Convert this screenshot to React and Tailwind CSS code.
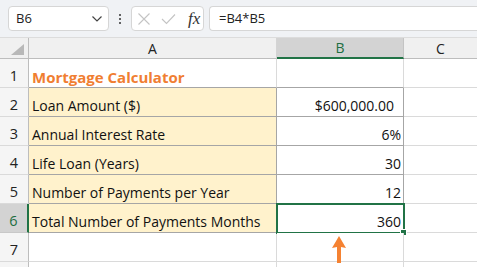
import React from "react";

const font = { fontFamily: '"Open Sans", "Noto Sans", sans-serif' };

// Rows of the sheet: label in A, value in B
const rows = [
  { n: 1, a: "Mortgage Calculator", b: "", title: true },
  { n: 2, a: "Loan Amount ($)", b: "$600,000.00", pad: "pr-[9px]" },
  { n: 3, a: "Annual Interest Rate", b: "6%" },
  { n: 4, a: "Life Loan (Years)", b: "30" },
  { n: 5, a: "Number of Payments per Year", b: "12" },
  { n: 6, a: "Total Number of Payments Months", b: "360", active: true },
  { n: 7, a: "", b: "" },
  { n: 8, a: "", b: "", hidden: true },
];

function Chevron() {
  return (
    <svg width="12" height="8" viewBox="0 0 12 8" fill="none">
      <path d="M1.5 1.5 L6 6 L10.5 1.5" stroke="#444" strokeWidth="1.2" />
    </svg>
  );
}

function FormulaBar() {
  return (
    <div className="h-[38px] bg-[#f0f2f5] flex items-center border-b border-[#dcdcdc]">
      <div className="ml-[8px] w-[101px] h-[25px] bg-white border border-[#d6d6d6] rounded-[4px] flex items-center justify-between pl-[7px] pr-[5px]">
        <span className="text-[13px] text-[#222]">B6</span>
        <Chevron />
      </div>
      <div className="w-[22px] flex flex-col items-center gap-[2px]">
        <span className="w-[2px] h-[2px] bg-[#333] rounded-full"></span>
        <span className="w-[2px] h-[2px] bg-[#333] rounded-full"></span>
        <span className="w-[2px] h-[2px] bg-[#333] rounded-full"></span>
      </div>
      <div className="w-[73px] h-[25px] bg-white border border-[#d6d6d6] rounded-[4px] flex items-center pl-[5px]">
        <svg width="14" height="14" viewBox="0 0 14 14">
          <path d="M1.5 1.5 L12.5 12.5 M12.5 1.5 L1.5 12.5" stroke="#c4c4c4" strokeWidth="1.1" />
        </svg>
        <svg className="ml-[10px]" width="15" height="12" viewBox="0 0 15 12">
          <path d="M1 6 L5.5 10.5 L14 1.5" stroke="#c4c4c4" strokeWidth="1.1" fill="none" />
        </svg>
        <span
          className="ml-[12px] text-[17px] italic text-[#333] leading-none"
          style={{ fontFamily: '"Liberation Serif", serif' }}
        >
          fx
        </span>
      </div>
      <div className="ml-[5px] flex-1 h-[25px] bg-white border border-[#d6d6d6] border-r-0 rounded-l-[4px] flex items-center pl-[9px]">
        <span className="text-[13px] text-[#222]">=B4*B5</span>
      </div>
    </div>
  );
}

function HeaderRow() {
  return (
    <div className="flex h-[21px] bg-[#f0f0f0] text-[14px] text-[#222]">
      <div className="w-[29px] border-r border-b border-[#bdbdbd] flex items-end justify-end pr-[4px] pb-[3px]">
        <svg width="13" height="11" viewBox="0 0 13 11">
          <path d="M13 0 L13 11 L0 11 Z" fill="#b8b8b8" />
        </svg>
      </div>
      <div className="w-[248px] border-r border-b border-[#d4d4d4] border-b-[#bdbdbd] flex items-center justify-center">A</div>
      <div className="w-[127px] bg-[#d3d3d3] border-r border-[#c4c4c4] border-b-2 border-b-[#217346] flex items-center justify-center text-[#1e6e42]">
        B
      </div>
      <div className="flex-1 border-b border-[#bdbdbd] flex items-center justify-center">C</div>
    </div>
  );
}

function SheetRow({ r }) {
  const inTable = r.n >= 2 && r.n <= 6;
  const topOfTable = r.n === 1;
  const edge = inTable || topOfTable ? "border-b-[#a6a6a6]" : "border-b-[#dadada]";
  return (
    <div className="flex h-[29px] text-[14px] leading-[16px] text-[#111]">
      <div
        className={
          r.active
            ? "w-[29px] bg-[#d3d3d3] border-r-2 border-r-[#217346] border-b border-b-[#c8c8c8] flex items-end justify-center pb-[3px] text-[14.5px] text-[#1e6e42]"
            : "w-[29px] bg-[#f5f5f5] border-r border-r-[#bdbdbd] border-b border-b-[#dadada] flex items-end justify-center pb-[3px] text-[14.5px] text-[#222]"
        }
      >
        {r.hidden ? "" : r.n}
      </div>
      <div
        className={
          "w-[248px] border-b border-r flex items-end pl-[3px] pb-[2px] whitespace-nowrap overflow-hidden " +
          edge +
          (inTable ? " bg-[#fff2cc] border-r-[#a6a6a6]" : " bg-white border-r-[#dadada]")
        }
      >
        {r.title ? (
          <span className="text-[15px] font-bold text-[#f07e32]">{r.a}</span>
        ) : (
          r.a
        )}
      </div>
      <div
        className={
          "relative w-[127px] border-b border-r flex items-end justify-end pb-[2px] bg-white " +
          edge +
          (inTable ? " border-r-[#a6a6a6] " : " border-r-[#dadada] ") +
          (r.pad || "pr-[2px]")
        }
      >
        {r.active && (
          <>
            <div className="absolute -left-[1px] -top-[1px] w-[129px] h-[31px] border-2 border-[#217346]"></div>
            <div className="absolute -right-[4px] -bottom-[4px] w-[7px] h-[7px] bg-[#217346] border border-white"></div>
          </>
        )}
        <span className="relative">{r.b}</span>
      </div>
      <div className="flex-1 border-b border-b-[#dadada] bg-white"></div>
    </div>
  );
}

export default function App() {
  return (
    <div className="relative w-[477px] h-[267px] overflow-hidden bg-white" style={font}>
      <FormulaBar />
      <HeaderRow />
      {rows.map((r) => (
        <SheetRow key={r.n} r={r} />
      ))}

      {/* orange pointer under the result cell */}
      <svg className="absolute left-[331px] top-[236px]" width="16" height="27" viewBox="0 0 16 27">
        <path d="M8 0 L15 12 L10 11 L10 27 L6 27 L6 11 L1 12 Z" fill="#f58232" />
      </svg>
    </div>
  );
}
